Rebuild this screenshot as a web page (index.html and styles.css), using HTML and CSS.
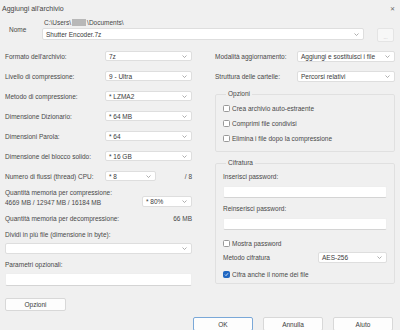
FILE: index.html
```html
<!DOCTYPE html>
<html lang="it">
<head>
<meta charset="UTF-8">
<title>Aggiungi all'archivio</title>
<link rel="stylesheet" href="styles.css">
</head>
<body>

<!-- Barra del titolo -->
<div class="titlebar">
    <span>Aggiungi all'archivio</span>
    <span class="close">&#x2715;</span>
</div>

<!-- Nome archivio -->
<div class="nome">
    <label class="nome-label">Nome</label>
    <div class="path">C:\Users\<span class="redacted"></span>\Documents\</div>
    <div class="combo">
        <span>Shutter Encoder.7z</span>
        <svg class="chev" width="5" height="3" viewBox="0 0 5 3"><path d="M0.5 0.5 L2.5 2.5 L4.5 0.5" fill="none" stroke="#8c8c8c" stroke-width="0.7"/></svg>
    </div>
    <button class="browse">...</button>
</div>

<div class="columns">

    <!-- Colonna sinistra -->
    <div class="left">
        <div class="row">
            <span class="label">Formato dell'archivio:</span>
            <div class="combo c87"><span>7z</span><svg class="chev" width="5" height="3" viewBox="0 0 5 3"><path d="M0.5 0.5 L2.5 2.5 L4.5 0.5" fill="none" stroke="#8c8c8c" stroke-width="0.7"/></svg></div>
        </div>
        <div class="row">
            <span class="label">Livello di compressione:</span>
            <div class="combo c87"><span>9 - Ultra</span><svg class="chev" width="5" height="3" viewBox="0 0 5 3"><path d="M0.5 0.5 L2.5 2.5 L4.5 0.5" fill="none" stroke="#8c8c8c" stroke-width="0.7"/></svg></div>
        </div>
        <div class="row">
            <span class="label">Metodo di compressione:</span>
            <div class="combo c87"><span>* LZMA2</span><svg class="chev" width="5" height="3" viewBox="0 0 5 3"><path d="M0.5 0.5 L2.5 2.5 L4.5 0.5" fill="none" stroke="#8c8c8c" stroke-width="0.7"/></svg></div>
        </div>
        <div class="row">
            <span class="label">Dimensione Dizionario:</span>
            <div class="combo c87"><span>* 64 MB</span><svg class="chev" width="5" height="3" viewBox="0 0 5 3"><path d="M0.5 0.5 L2.5 2.5 L4.5 0.5" fill="none" stroke="#8c8c8c" stroke-width="0.7"/></svg></div>
        </div>
        <div class="row">
            <span class="label">Dimensioni Parola:</span>
            <div class="combo c87"><span>* 64</span><svg class="chev" width="5" height="3" viewBox="0 0 5 3"><path d="M0.5 0.5 L2.5 2.5 L4.5 0.5" fill="none" stroke="#8c8c8c" stroke-width="0.7"/></svg></div>
        </div>
        <div class="row">
            <span class="label">Dimensione del blocco solido:</span>
            <div class="combo c87"><span>* 16 GB</span><svg class="chev" width="5" height="3" viewBox="0 0 5 3"><path d="M0.5 0.5 L2.5 2.5 L4.5 0.5" fill="none" stroke="#8c8c8c" stroke-width="0.7"/></svg></div>
        </div>
        <div class="row">
            <span class="label">Numero di flussi (thread) CPU:</span>
            <div class="combo c51"><span>* 8</span><svg class="chev" width="5" height="3" viewBox="0 0 5 3"><path d="M0.5 0.5 L2.5 2.5 L4.5 0.5" fill="none" stroke="#8c8c8c" stroke-width="0.7"/></svg></div>
            <span class="threads">/ 8</span>
        </div>
        <div class="mem">
            <div class="mem-text">
                <div>Quantità memoria per compressione:</div>
                <div>4669 MB / 12947 MB / 16184 MB</div>
            </div>
            <div class="combo c50"><span>* 80%</span><svg class="chev" width="5" height="3" viewBox="0 0 5 3"><path d="M0.5 0.5 L2.5 2.5 L4.5 0.5" fill="none" stroke="#8c8c8c" stroke-width="0.7"/></svg></div>
        </div>
        <div class="decomp">
            <span>Quantità memoria per decompressione:</span>
            <span>66 MB</span>
        </div>
        <div class="field-label">Dividi in più file (dimensione in byte):</div>
        <div class="combo full"><span></span><svg class="chev" width="5" height="3" viewBox="0 0 5 3"><path d="M0.5 0.5 L2.5 2.5 L4.5 0.5" fill="none" stroke="#8c8c8c" stroke-width="0.7"/></svg></div>
        <div class="field-label">Parametri opzionali:</div>
        <div class="textbox full"></div>
        <button class="btn opzioni">Opzioni</button>
    </div>

    <!-- Colonna destra -->
    <div class="right">
        <div class="row">
            <span class="label r">Modalità aggiornamento:</span>
            <div class="combo c98"><span>Aggiungi e sostituisci i file</span><svg class="chev" width="5" height="3" viewBox="0 0 5 3"><path d="M0.5 0.5 L2.5 2.5 L4.5 0.5" fill="none" stroke="#8c8c8c" stroke-width="0.7"/></svg></div>
        </div>
        <div class="row">
            <span class="label r">Struttura delle cartelle:</span>
            <div class="combo c98"><span>Percorsi relativi</span><svg class="chev" width="5" height="3" viewBox="0 0 5 3"><path d="M0.5 0.5 L2.5 2.5 L4.5 0.5" fill="none" stroke="#8c8c8c" stroke-width="0.7"/></svg></div>
        </div>

        <fieldset class="group opzioni-group">
            <legend>Opzioni</legend>
            <div class="check"><span class="box"></span>Crea archivio auto-estraente</div>
            <div class="check"><span class="box"></span>Comprimi file condivisi</div>
            <div class="check"><span class="box"></span>Elimina i file dopo la compressione</div>
        </fieldset>

        <fieldset class="group cifratura">
            <legend>Cifratura</legend>
            <div class="pw-label">Inserisci password:</div>
            <div class="textbox pw"></div>
            <div class="pw-label">Reinserisci password:</div>
            <div class="textbox pw"></div>
            <div class="check mostra"><span class="box"></span>Mostra password</div>
            <div class="metodo">
                <span>Metodo cifratura</span>
                <div class="combo c69"><span>AES-256</span><svg class="chev" width="5" height="3" viewBox="0 0 5 3"><path d="M0.5 0.5 L2.5 2.5 L4.5 0.5" fill="none" stroke="#8c8c8c" stroke-width="0.7"/></svg></div>
            </div>
            <div class="check nomi"><span class="box checked"><svg width="5" height="5" viewBox="0 0 5 5"><path d="M1 2.6 L2 3.6 L4 1.3" fill="none" stroke="#fff" stroke-width="0.8"/></svg></span>Cifra anche il nome dei file</div>
        </fieldset>
    </div>
</div>

<!-- Pulsanti -->
<div class="footer">
    <button class="btn main default">OK</button>
    <button class="btn main">Annulla</button>
    <button class="btn main">Aiuto</button>
</div>

</body>
</html>
```

FILE: styles.css
```css
/* Allgemein */
body {
    margin: 0;
    width: 400px;
    height: 330px;
    overflow: hidden;
    background-color: #f0f0f0;
    font-family: "Liberation Sans", Arial, sans-serif;
    font-size: 6.5px;
    color: #484848;
}

.titlebar {
    height: 16px;
    display: flex;
    align-items: center;
    justify-content: space-between;
    padding: 0 5px 0 2px;
    font-size: 7px;
    color: #444;
}

.close {
    font-size: 6px;
    color: #666;
}

/* Nome */
.nome {
    display: grid;
    grid-template-columns: 33px 322px 13px 17px;
    grid-template-rows: 11px 13px;
    padding: 1px 0 0 9px;
    align-items: center;
}

.nome-label {
    grid-row: 1 / 3;
}

.path {
    grid-column: 2;
    padding-left: 2px;
    display: flex;
    align-items: center;
}

.redacted {
    display: inline-block;
    width: 14px;
    height: 7px;
    background-color: #b8b8b8;
    margin: 0 1px;
}

.nome .combo {
    grid-column: 2;
    height: 12px;
    align-self: start;
}

.browse {
    grid-column: 4;
    height: 14px;
    width: 17px;
    padding: 0;
    border: 1px solid #e4e4e4;
    border-radius: 2px;
    background-color: #f7f7f7;
    color: #b4b4b4;
    font-size: 5px;
    font-family: inherit;
    line-height: 16px;
}

/* Combobox */
.combo {
    box-sizing: border-box;
    height: 10px;
    display: flex;
    align-items: center;
    justify-content: space-between;
    padding: 0 4px 0 3px;
    background-color: #fff;
    border: 1px solid #dedede;
    border-radius: 2px;
    color: #3a3a3a;
    white-space: nowrap;
}

.c87 { width: 87px; }
.c51 { width: 51px; }
.c50 { width: 50px; height: 11px; }
.c98 { width: 98px; height: 11px; }
.c69 { width: 69px; height: 11px; }
.full { width: 187px; }

.textbox {
    box-sizing: border-box;
    background-color: #fff;
    border: 1px solid #eeeeee;
    border-bottom-color: #d4d4d4;
    border-radius: 2px;
}

/* Spalten */
.columns {
    display: flex;
    margin-top: 5px;
}

.left {
    width: 187px;
    padding-left: 5px;
}

.right {
    width: 180px;
    margin-left: 23px;
}

.row {
    display: flex;
    align-items: center;
    height: 20px;
}

.label {
    width: 100px;
}

.label.r {
    width: 82px;
}

.threads {
    margin-left: auto;
}

.mem {
    display: flex;
    justify-content: space-between;
    height: 20px;
    padding-top: 2px;
}

.mem-text div {
    height: 10px;
    line-height: 10px;
}

.mem .combo {
    align-self: flex-end;
    margin-bottom: 1px;
}

.decomp {
    display: flex;
    justify-content: space-between;
    margin-top: 6px;
    line-height: 10px;
}

.field-label {
    margin-top: 6px;
    line-height: 10px;
}

.left .combo.full {
    margin-top: 3px;
    height: 11px;
}

.left .textbox.full {
    margin-top: 3px;
    height: 13px;
}

/* Buttons */
.btn {
    box-sizing: border-box;
    background-color: #fdfdfd;
    border: 1px solid #d8d8d8;
    border-radius: 2px;
    font-family: inherit;
    font-size: 6.5px;
    color: #3a3a3a;
    padding: 0;
}

.opzioni {
    display: block;
    margin-top: 12px;
    width: 61px;
    height: 13px;
}

.footer {
    display: flex;
    justify-content: flex-end;
    gap: 10px;
    padding-right: 7px;
    margin-top: 6px;
}

.main {
    width: 60px;
    height: 14px;
}

.default {
    border-color: #7aa8d8;
}

/* Gruppen */
.group {
    margin: 0;
    border: 1px solid #e0e0e0;
    border-radius: 2px;
    min-width: 0;
}

.group legend {
    padding: 0 2px;
    margin-left: 3px;
    line-height: 8px;
}

.opzioni-group {
    margin-top: 4px;
    padding: 3px 7px 5px;
}

.cifratura {
    margin-top: 7px;
    padding: 0 7px 1.5px;
}

.check {
    display: flex;
    align-items: center;
    height: 15px;
}

.box {
    box-sizing: border-box;
    width: 7px;
    height: 7px;
    margin-right: 2px;
    border: 1px solid #999;
    border-radius: 1.5px;
    background-color: #fff;
    display: flex;
    align-items: center;
    justify-content: center;
}

.box.checked {
    background-color: #2168c2;
    border-color: #2168c2;
}

.pw-label {
    margin-top: 5px;
    line-height: 10px;
}

.pw-label + .textbox + .pw-label {
    margin-top: 6px;
}

.textbox.pw {
    margin-top: 4px;
    height: 12px;
}

.mostra {
    margin-top: 6px;
    height: 14px;
}

.metodo {
    display: flex;
    align-items: center;
    justify-content: space-between;
    height: 15px;
}

.nomi {
    margin-top: 1.5px;
}
```
